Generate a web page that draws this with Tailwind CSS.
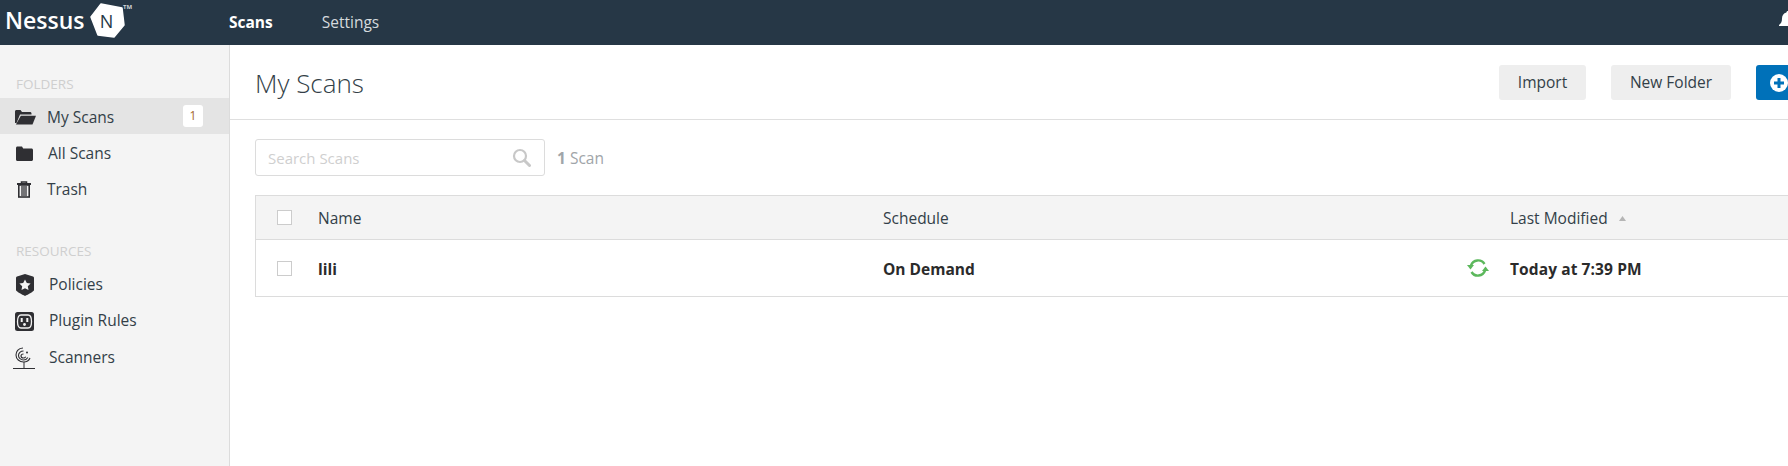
<!DOCTYPE html>
<html lang="en">
<head>
    <meta charset="UTF-8">
    <title>Nessus - My Scans</title>
    <script src="https://cdn.jsdelivr.net/npm/@tailwindcss/browser@4"></script>
</head>
<body class="bg-white overflow-hidden font-['Open_Sans',sans-serif] text-[#333f48]">
<div class="w-[1788px] h-[466px] overflow-hidden flex flex-col">
    <!-- top bar -->
    <header class="h-[45px] shrink-0 bg-[#263746] flex items-center relative overflow-hidden">
        <div class="w-[229px] h-[45px] flex items-center pl-[5px]">
            <span class="text-white text-[23px] font-semibold leading-none w-[85px] mt-[-5px]">Nessus</span>
            <svg class="self-start mt-[2px]" width="36" height="38" viewBox="0 0 36 38">
                <polygon points="11,2 32,6 34,23 24,35 8,33 1,15" fill="#fff" stroke="#fff" stroke-width="1.500" stroke-linejoin="round"/>
                <text x="16.500" y="26" text-anchor="middle" font-size="18" fill="#263746">N</text>
            </svg>
            <span class="text-[#cfd4d8] text-[6px] font-bold self-start mt-[3px] ml-[-3px]">TM</span>
        </div>
        <nav class="flex items-center text-[15.5px]">
            <a class="text-white font-bold">Scans</a>
            <a class="text-[#d5dade] ml-[49px]">Settings</a>
        </nav>
        <svg class="absolute left-[1777px] top-[10px]" width="22" height="20" viewBox="0 0 22 20" fill="#fff">
            <path d="M11 1c1 0 1.600.7 1.600 1.500C15.500 3.200 17 5.500 17 8.500c0 3.500 1 5 3 6.500v1H2v-1c2-1.500 3-3 3-6.500 0-3 1.500-5.300 4.400-6C9.400 1.700 10 1 11 1z"/>
        </svg>
    </header>

    <div class="flex flex-1 min-h-0">
        <!-- sidebar -->
        <aside class="w-[230px] shrink-0 bg-[#f4f4f4] border-r border-[#dcdcdc] pt-[30px] text-[15.5px]">
            <p class="pl-[16px] text-[13.5px] leading-[18px] text-[#cfcfcf] mb-[5px]">FOLDERS</p>
            <a class="flex items-center h-[36px] pt-[2px] bg-[#e4e4e4] relative">
                <svg class="ml-[15px]" width="21" height="16" viewBox="0 0 21 16" fill="#2f2f33">
                    <path d="M0 14V2.500C0 1.700.6 1 1.500 1h4L7 3h8c.8 0 1.500.6 1.500 1.400V5.500H5L1.500 14z"/>
                    <path d="M5.800 6.800H21L17.500 15.500H.9z"/>
                </svg>
                <span class="ml-[11px] mt-[1px]">My Scans</span>
                <span class="absolute left-[183px] top-[7px] w-[20px] h-[22px] bg-white rounded-[3px] flex items-center justify-center text-[12px] text-[#a5672e]">1</span>
            </a>
            <a class="flex items-center h-[36px] pt-[2px]">
                <svg class="ml-[16px]" width="17" height="15" viewBox="0 0 17 15" fill="#2f2f33">
                    <path d="M0 2c0-.8.6-1.500 1.500-1.500h4.500L7.200 2.500h8.300c.8 0 1.500.6 1.500 1.500v9.500c0 .8-.7 1.500-1.500 1.500h-14C.6 15 0 14.300 0 13.500z"/>
                </svg>
                <span class="ml-[15px] mt-[1px]">All Scans</span>
            </a>
            <a class="flex items-center h-[36px] pt-[2px]">
                <svg class="ml-[17px]" width="14" height="17" viewBox="0 0 14 17" fill="none" stroke="#2f2f33">
                    <path d="M4.500 2.500V1h5v1.500" stroke-width="1.500"/>
                    <path d="M0 3h14" stroke-width="2"/>
                    <rect x="1.800" y="4" width="10.400" height="12" stroke-width="1.600" fill="#f4f4f4"/>
                    <path d="M5 5v10M7 5v10M9 5v10" stroke-width="1.300"/>
                </svg>
                <span class="ml-[16px] mt-[1px]">Trash</span>
            </a>

            <p class="pl-[16px] text-[13.5px] leading-[18px] text-[#cfcfcf] mt-[36px] mb-[7px]">RESOURCES</p>
            <a class="flex items-center h-[36px]">
                <svg class="ml-[16px]" width="18" height="22" viewBox="0 0 18 22">
                    <path d="M9 0l8 2.500c.6.200 1 .7 1 1.300V16c0 1.500-6 4.500-9 6-3-1.500-9-4.500-9-6V3.800c0-.6.400-1.100 1-1.300z" fill="#2f2f33"/>
                    <polygon points="9,5.500 10.800,9 14.600,9.500 11.800,12.200 12.500,16 9,14.200 5.500,16 6.200,12.200 3.400,9.500 7.200,9" fill="#f4f4f4"/>
                </svg>
                <span class="ml-[15px]">Policies</span>
            </a>
            <a class="flex items-center h-[36px]">
                <svg class="ml-[15px]" width="19" height="19" viewBox="0 0 19 19">
                    <rect width="19" height="19" rx="2.500" fill="#2f2f33"/>
                    <path d="M6 3h7c2 0 3.500 2 3.500 6.500S15 16 13 16H6c-2 0-3.500-2-3.500-6.500S4 3 6 3z" fill="none" stroke="#f4f4f4" stroke-width="1.300"/>
                    <rect x="5.700" y="6" width="2" height="4" fill="#f4f4f4"/>
                    <rect x="11.300" y="6" width="2" height="4" fill="#f4f4f4"/>
                    <circle cx="9.500" cy="12.500" r="1.400" fill="#f4f4f4"/>
                </svg>
                <span class="ml-[15px]">Plugin Rules</span>
            </a>
            <a class="flex items-center h-[36px] pt-[2px]">
                <svg class="ml-[13px]" width="22" height="23" viewBox="0 0 22 23" fill="none" stroke="#2f2f33">
                    <path d="M10 1C5 1 3 5 3 8c0 4 3.500 7 7.500 7 3 0 5.500-1.500 6.500-4" stroke-width="1.100"/>
                    <path d="M10.500 4C7.500 4 5.500 6 5.500 8.500s2.300 4.500 5 4.500c2 0 3.500-1 4.300-2.500" stroke-width="1.100"/>
                    <path d="M10.500 7C9 7 8 8 8 9s1 2 2.500 2c1 0 1.800-.5 2.200-1.300" stroke-width="1.100"/>
                    <circle cx="14" cy="5.500" r="1" fill="#2f2f33" stroke="none"/>
                    <path d="M11 15v6.500M0 21.500h22" stroke-width="1"/>
                </svg>
                <span class="ml-[14px]">Scanners</span>
            </a>
        </aside>

        <!-- main -->
        <main class="w-[1700px] shrink-0">
            <div class="h-[75px] border-b border-[#dfdfdf] flex items-center pl-[25px]">
                <h1 class="text-[26px] font-light leading-none text-[#333f48] mt-[1px]">My Scans</h1>
                <div class="ml-auto flex items-center gap-[25px] mr-[34px] mt-[1px] text-[15.5px]">
                    <button class="w-[87px] h-[35px] bg-[#eeeeee] rounded-[3px]">Import</button>
                    <button class="w-[120px] h-[35px] bg-[#eeeeee] rounded-[3px]">New Folder</button>
                    <button class="w-[140px] h-[35px] bg-[#0071b9] rounded-[3px] flex items-center pl-[14px]">
                        <svg width="18" height="18" viewBox="0 0 18 18">
                            <circle cx="9" cy="9" r="9" fill="#fff"/>
                            <path d="M9 4v10M4 9h10" stroke="#0071b9" stroke-width="3"/>
                        </svg>
                    </button>
                </div>
            </div>

            <div class="flex items-center mt-[19px] ml-[25px]">
                <div class="w-[290px] h-[37px] border border-[#dcdcdc] rounded-[3px] flex items-center pl-[12px] pr-[13px]">
                    <span class="text-[15px] text-[#cfcfcf] mt-[2px]">Search Scans</span>
                    <svg class="ml-auto" width="19" height="19" viewBox="0 0 19 19" fill="none" stroke="#c8c8c8">
                        <circle cx="8" cy="8" r="6" stroke-width="2.200"/>
                        <path d="M12.500 12.500l5 5" stroke-width="3" stroke-linecap="round"/>
                    </svg>
                </div>
                <span class="ml-[12px] mt-[3px] text-[15.5px] text-[#a0a5a9]"><b>1</b> Scan</span>
            </div>

            <div class="mt-[19px] ml-[25px] w-[1660px] border border-[#dcdcdc] text-[15.5px]">
                <div class="h-[44px] pt-[2px] bg-[#f4f4f4] border-b border-[#dcdcdc] flex items-center">
                    <span class="w-[15px] h-[15px] border border-[#cccccc] bg-white ml-[21px] mt-[-3px]"></span>
                    <span class="ml-[26px] w-[565px]">Name</span>
                    <span class="w-[627px]">Schedule</span>
                    <span class="flex items-center">Last Modified
                        <svg class="ml-[11px]" width="7" height="5" viewBox="0 0 7 5"><path d="M3.500 0L7 5H0z" fill="#b5b5b5"/></svg>
                    </span>
                </div>
                <div class="h-[56px] pt-[4px] flex items-center font-bold text-[#2b2b2b]">
                    <span class="w-[15px] h-[15px] border border-[#cccccc] bg-white ml-[21px] mt-[-4px]"></span>
                    <span class="ml-[26px] w-[565px]">lili</span>
                    <span class="w-[627px] relative">On Demand
                        <svg class="absolute left-[584px] top-[-1px]" width="22" height="22" viewBox="0 0 22 22" fill="none" stroke="#5cb85c" stroke-width="2.400">
                            <path d="M4 8.500A7.500 7.500 0 0 1 17.500 7"/>
                            <path d="M18 13.500A7.500 7.500 0 0 1 4.500 15"/>
                            <path d="M0 8h7L3.500 12.500z" fill="#5cb85c" stroke="none"/>
                            <path d="M15 14h7L18.500 9.500z" fill="#5cb85c" stroke="none"/>
                        </svg>
                    </span>
                    <span class="tracking-[0.1px]">Today at 7:39 PM</span>
                </div>
            </div>
        </main>
    </div>
</div>
</body>
</html>
